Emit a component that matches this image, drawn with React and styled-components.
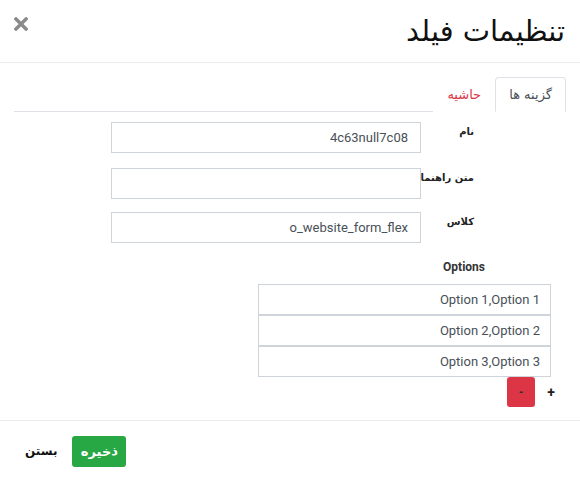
import React from 'react'
import styled, { createGlobalStyle } from 'styled-components'

const GlobalStyle = createGlobalStyle`
  html, body {
    margin: 0;
    padding: 0;
    background: #fff;
  }
  body {
    font-family: Roboto, "DejaVu Sans", sans-serif;
    color: #212529;
  }
  * { box-sizing: border-box; }
`

const Modal = styled.div`
  direction: rtl;
  width: 580px;
  height: 481px;
  display: flex;
  flex-direction: column;
  background: #fff;
`

const Header = styled.div`
  height: 63px;
  display: flex;
  align-items: flex-start;
  justify-content: space-between;
  padding: 13px 15px 0 14px;
  border-bottom: 1px solid #e9ecef;
`

const Title = styled.h4`
  margin: 0;
  font-family: "DejaVu Sans", sans-serif;
  font-size: 29px;
  font-weight: normal;
  line-height: 36px;
  color: #111;
`

const CloseIcon = styled.button`
  border: none;
  background: none;
  padding: 0;
  margin-top: 4px;
  width: 14px;
  height: 14px;
  display: flex;
  cursor: pointer;
`

const Body = styled.div`
  flex: 1;
  padding: 14px 14px 0 14px;
`

const TabBar = styled.div`
  display: flex;
  border-bottom: 1px solid #dee2e6;
  height: 35px;
`

const Tab = styled.div`
  height: 35px;
  padding: 0 13px;
  display: flex;
  align-items: center;
  font-family: "DejaVu Sans", sans-serif;
  font-size: 13px;
  color: ${p => (p.active ? '#495057' : '#dc3545')};
  border: 1px solid ${p => (p.active ? '#dee2e6' : 'transparent')};
  border-bottom-color: ${p => (p.active ? '#fff' : 'transparent')};
  border-radius: 4px 4px 0 0;
  background: #fff;
  margin-bottom: -1px;
`

const Row = styled.div`
  display: flex;
  align-items: flex-start;
  padding-right: 92px;
  margin-top: ${p => p.top}px;
`

const Label = styled.label`
  width: 53px;
  flex-shrink: 0;
  font-family: "DejaVu Sans", sans-serif;
  font-size: 10px;
  font-weight: bold;
  color: #222;
  padding-top: 4px;
  white-space: nowrap;
`

const Input = styled.div`
  width: 310px;
  height: 31px;
  border: 1px solid #ced4da;
  font-size: 13px;
  color: #495057;
  display: flex;
  align-items: center;
  justify-content: flex-end;
  padding: 0 12px;
`

const OptionsLabel = styled.div`
  margin-top: 17px;
  padding-right: 81px;
  font-size: 12px;
  font-weight: bold;
  color: #333;
`

const Table = styled.div`
  margin-top: 10px;
  margin-right: 15px;
  width: 293px;
  display: flex;
  flex-direction: column;
`

const OptionCell = styled.div`
  height: 31px;
  border: 1px solid #ced4da;
  font-size: 13px;
  color: #495057;
  display: flex;
  align-items: center;
  padding-right: 10px;
`

const Actions = styled.div`
  display: flex;
  align-items: center;
  padding-right: 11px;
  gap: 12px;
`

const Plus = styled.span`
  font-size: 14px;
  font-weight: bold;
  color: #222;
  width: 8px;
`

const MinusButton = styled.button`
  width: 28px;
  height: 30px;
  border: none;
  border-radius: 3px;
  background: #dc3545;
  color: #333;
  font-size: 12px;
  font-weight: bold;
  padding: 0;
`

const Footer = styled.div`
  height: 61px;
  border-top: 1px solid #e9ecef;
  display: flex;
  align-items: center;
  justify-content: flex-end;
  padding: 0 13px;
  gap: 3px;
`

const SaveButton = styled.button`
  height: 31px;
  width: 54px;
  border: none;
  border-radius: 3px;
  background: #28a745;
  color: #fff;
  font-family: "DejaVu Sans", sans-serif;
  font-size: 13px;
  font-weight: bold;
  padding: 0;
`

const LinkButton = styled.button`
  height: 31px;
  border: none;
  background: none;
  color: #111;
  font-family: "DejaVu Sans", sans-serif;
  font-size: 12px;
  font-weight: bold;
  padding: 0 12px;
`

const fields = [
  { label: 'نام', value: '4c63null7c08', top: 10 },
  { label: 'متن راهنما', value: '', top: 15 },
  { label: 'کلاس', value: 'o_website_form_flex', top: 13 }
]

const options = ['Option 1,Option 1', 'Option 2,Option 2', 'Option 3,Option 3']

export default function App() {
  return (
    <Modal>
      <GlobalStyle />
      <Header>
        <Title>تنظیمات فیلد</Title>
        <CloseIcon aria-label="close">
          <svg width="14" height="14" viewBox="0 0 14 14">
            <path d="M2 2 L12 12 M12 2 L2 12" stroke="#8a8a8a" strokeWidth="3.4" strokeLinecap="square" />
          </svg>
        </CloseIcon>
      </Header>
      <Body>
        <TabBar>
          <Tab active>گزینه ها</Tab>
          <Tab>حاشیه</Tab>
        </TabBar>
        {fields.map(f => (
          <Row key={f.label} top={f.top}>
            <Label>{f.label}</Label>
            <Input dir="ltr">{f.value}</Input>
          </Row>
        ))}
        <OptionsLabel>Options</OptionsLabel>
        <Table>
          {options.map(o => (
            <OptionCell key={o}>{o}</OptionCell>
          ))}
        </Table>
        <Actions>
          <Plus>+</Plus>
          <MinusButton>-</MinusButton>
        </Actions>
      </Body>
      <Footer>
        <SaveButton>ذخیره</SaveButton>
        <LinkButton>بستن</LinkButton>
      </Footer>
    </Modal>
  )
}
